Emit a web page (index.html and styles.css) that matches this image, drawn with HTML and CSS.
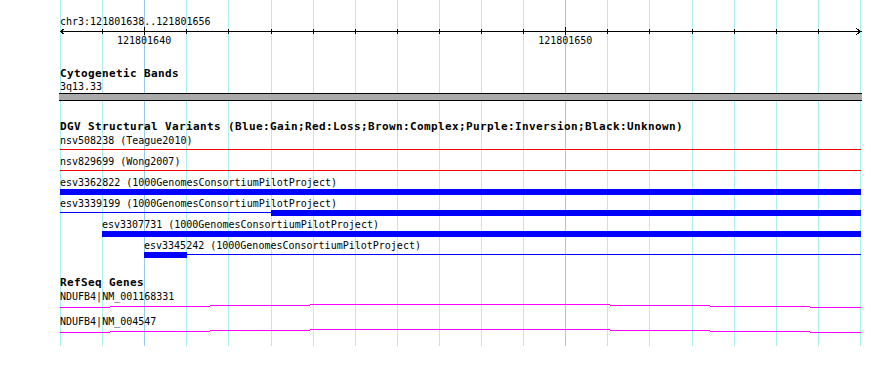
FILE: index.html
```html
<!DOCTYPE html>
<html lang="en">
<head>
<meta charset="UTF-8">
<title>chr3:121801638..121801656</title>
<link rel="stylesheet" href="styles.css">
</head>
<body>
<div class="panel">
  <!-- grid: one line per base, 800px / 19 bases -->
  <svg class="grid" width="890" height="346" viewBox="0 0 890 346">
    <path class="minor" d="M60.5 0V346M102.5 0V346M186.5 0V346M228.5 0V346M271.5 0V346M313.5 0V346M355.5 0V346M397.5 0V346M439.5 0V346M481.5 0V346M523.5 0V346M607.5 0V346M649.5 0V346M692.5 0V346M734.5 0V346M776.5 0V346M818.5 0V346M860.5 0V346"/>
    <path class="major" d="M144.5 0V346M565.5 0V346"/>
  </svg>

  <div class="ruler">
    <div class="loc">chr3:121801638..121801656</div>
    <svg class="axis" width="890" height="10" viewBox="0 0 890 10">
      <path d="M60 5.5H862"/>
      <path d="M64.5 2.5L60.5 5.5L64.5 8.5M856.5 2.5L860.5 5.5L856.5 8.5"/>
      <path d="M102.5 3V8M186.5 3V8M228.5 3V8M271.5 3V8M313.5 3V8M355.5 3V8M397.5 3V8M439.5 3V8M481.5 3V8M523.5 3V8M607.5 3V8M649.5 3V8M692.5 3V8M734.5 3V8M776.5 3V8M818.5 3V8"/>
      <path d="M144.5 1V9M565.5 1V9"/>
    </svg>
    <div class="ticklabels">
      <span style="margin-left:57px">121801640</span>
      <span style="margin-left:367px">121801650</span>
    </div>
  </div>

  <div class="track cyto">
    <div class="title">Cytogenetic Bands</div>
    <div class="name">3q13.33</div>
    <div class="band"></div>
  </div>

  <div class="track dgv">
    <div class="title">DGV Structural Variants (Blue:Gain;Red:Loss;Brown:Complex;Purple:Inversion;Black:Unknown)</div>
    <div class="feat">
      <div class="name">nsv508238 (Teague2010)</div>
      <div class="glyph"><span class="thin red" style="width:801px"></span></div>
    </div>
    <div class="feat">
      <div class="name">nsv829699 (Wong2007)</div>
      <div class="glyph"><span class="thin red" style="width:801px"></span></div>
    </div>
    <div class="feat">
      <div class="name">esv3362822 (1000GenomesConsortiumPilotProject)</div>
      <div class="glyph"><span class="thick blue" style="width:801px"></span></div>
    </div>
    <div class="feat">
      <div class="name">esv3339199 (1000GenomesConsortiumPilotProject)</div>
      <div class="glyph"><span class="thin blue" style="width:211px"></span><span class="thick blue" style="width:590px"></span></div>
    </div>
    <div class="feat" style="margin-left:42px">
      <div class="name">esv3307731 (1000GenomesConsortiumPilotProject)</div>
      <div class="glyph"><span class="thick blue" style="width:759px"></span></div>
    </div>
    <div class="feat" style="margin-left:84px">
      <div class="name">esv3345242 (1000GenomesConsortiumPilotProject)</div>
      <div class="glyph"><span class="thick blue" style="width:43px"></span><span class="thin blue" style="width:674px"></span></div>
    </div>
  </div>

  <div class="track refseq">
    <div class="title">RefSeq Genes</div>
    <div class="gene">
      <div class="name">NDUFB4|NM_001168331</div>
      <svg width="801" height="12" viewBox="0 0 801 12">
        <path class="hat" d="M0 4.5H50M50 3.5H150M150 2.5H250M250 1.5H550M550 2.5H650M650 3.5H750M750 4.5H801"/>
      </svg>
    </div>
    <div class="gene">
      <div class="name">NDUFB4|NM_004547</div>
      <svg width="801" height="12" viewBox="0 0 801 12">
        <path class="hat" d="M0 4.5H50M50 3.5H150M150 2.5H250M250 1.5H550M550 2.5H650M650 3.5H750M750 4.5H801"/>
      </svg>
    </div>
  </div>
</div>
</body>
</html>
```

FILE: styles.css
```css
/* ----- gbrowse-like panel, 60px left pad, 800px of sequence ----- */
body{margin:0;background:#fff;color:#000;
     font-family:"DejaVu Sans Mono",monospace;font-size:10px;line-height:13px;}
.panel{position:relative;z-index:0;width:890px;height:346px;}
.grid{position:absolute;left:0;top:0;z-index:-1;}
svg path{fill:none;stroke-width:1;shape-rendering:crispEdges;}
.grid .minor{stroke:#afeeee;}
.grid .major{stroke:#9ccbea;}

.ruler{padding-top:15px;}
.loc{margin-left:60px;}
.axis{display:block;margin-top:-2px;}
.axis path{stroke:#000;}
.ticklabels{display:flex;margin-top:-2px;padding-left:60px;}

.track{margin-left:60px;width:801px;}
.title{font-weight:bold;font-size:11px;letter-spacing:.378px;line-height:12px;white-space:nowrap;}
.name{white-space:nowrap;}
.cyto{margin-top:21px;}
.band{margin-left:-1px;width:803px;height:6px;background:#aaa;
      border-top:1px solid #000;border-bottom:1px solid #000;}
.dgv{margin-top:20px;}
.refseq{margin-top:19px;}
.dgv .title,.refseq .title{margin-bottom:1px;}

.glyph{display:flex;height:6px;margin-bottom:2px;}
.thin{height:1px;margin-top:2px;}
.thick{height:6px;}
.blue{background:#00f;}
.red{background:#f00;}

.gene svg{display:block;}
.gene .hat{stroke:#f0f;}
```
